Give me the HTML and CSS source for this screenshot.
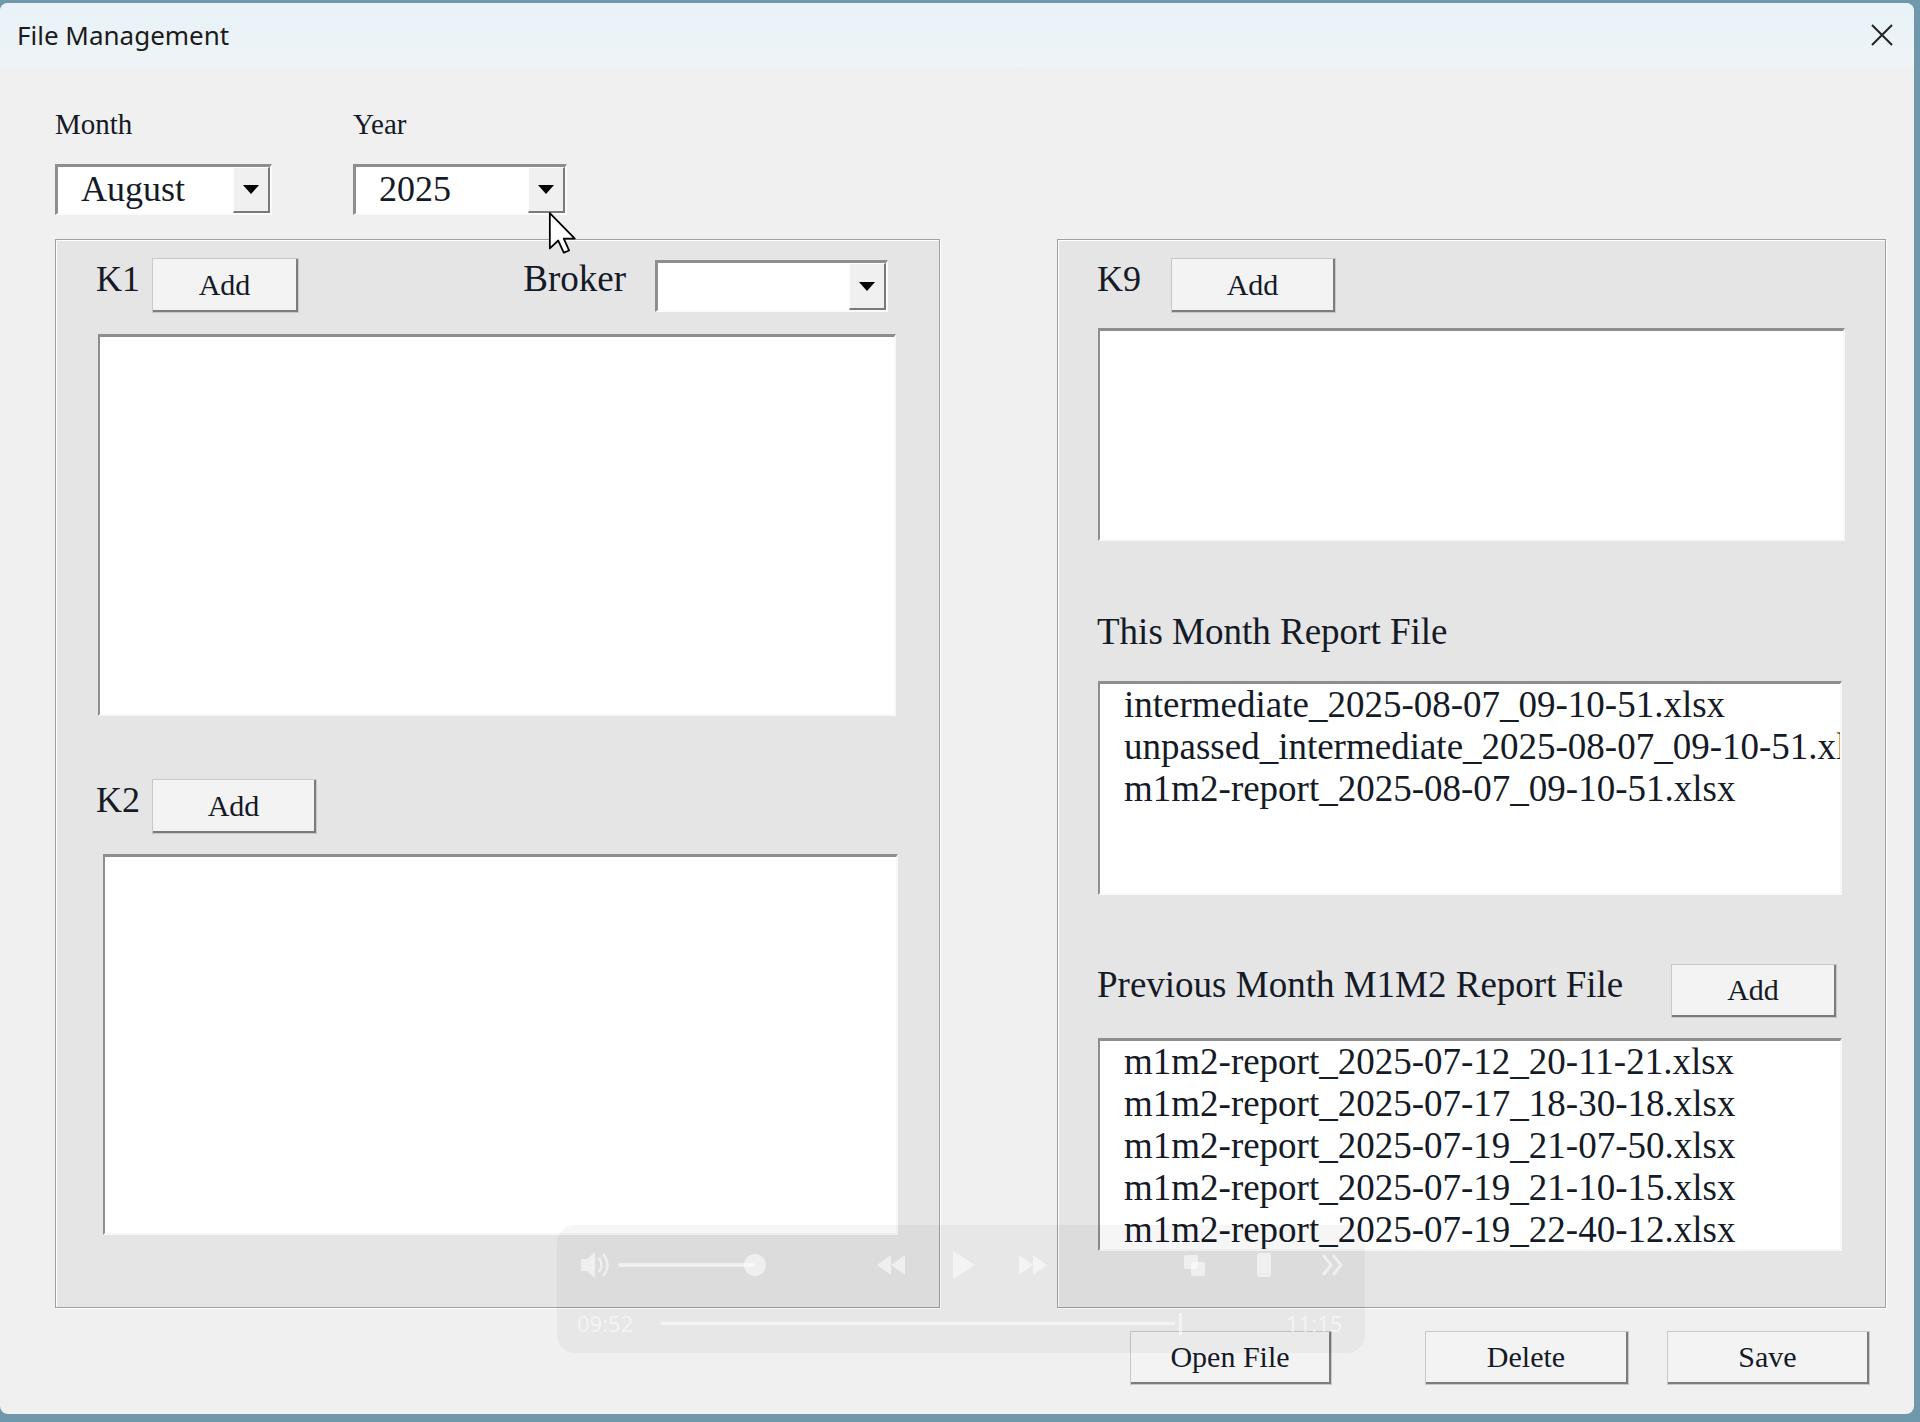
FILE: index.html
```html
<!DOCTYPE html>
<html lang="en">
<head>
    <meta charset="UTF-8">
    <title>File Management</title>
    <link rel="stylesheet" href="styles.css">
</head>
<body>
    <div class="window">
        <div class="titlebar">
            <span class="title">File Management</span>
            <span class="close">
                <svg width="24" height="24" viewBox="0 0 24 24"><path d="M2 2 L22 22 M22 2 L2 22" stroke="#222" stroke-width="2" fill="none"/></svg>
            </span>
        </div>

        <div class="content">
            <div class="period">
                <div class="field month">
                    <label>Month</label>
                    <div class="combo">
                        <span class="combo_value">August</span>
                        <span class="combo_btn"></span>
                    </div>
                </div>
                <div class="field year">
                    <label>Year</label>
                    <div class="combo">
                        <span class="combo_value">2025</span>
                        <span class="combo_btn"></span>
                    </div>
                </div>
            </div>

            <div class="panels">
                <section class="panel panel_left">
                    <div class="row row_k1">
                        <span class="tag">K1</span>
                        <button class="btn add_k1">Add</button>
                        <span class="tag broker_label">Broker</span>
                        <div class="combo broker">
                            <span class="combo_value"></span>
                            <span class="combo_btn"></span>
                        </div>
                    </div>
                    <ul class="listbox list_k1"></ul>

                    <div class="row row_k2">
                        <span class="tag">K2</span>
                        <button class="btn add_k2">Add</button>
                    </div>
                    <ul class="listbox list_k2"></ul>
                </section>

                <section class="panel panel_right">
                    <div class="row">
                        <span class="tag">K9</span>
                        <button class="btn add_k9">Add</button>
                    </div>
                    <ul class="listbox list_k9"></ul>

                    <h2 class="heading">This Month Report File</h2>
                    <ul class="listbox list_month">
                        <li>intermediate_2025-08-07_09-10-51.xlsx</li>
                        <li>unpassed_intermediate_2025-08-07_09-10-51.xlsx</li>
                        <li>m1m2-report_2025-08-07_09-10-51.xlsx</li>
                    </ul>

                    <div class="row row_prev">
                        <h2 class="heading">Previous Month M1M2 Report File</h2>
                        <button class="btn add_prev">Add</button>
                    </div>
                    <ul class="listbox list_prev">
                        <li>m1m2-report_2025-07-12_20-11-21.xlsx</li>
                        <li>m1m2-report_2025-07-17_18-30-18.xlsx</li>
                        <li>m1m2-report_2025-07-19_21-07-50.xlsx</li>
                        <li>m1m2-report_2025-07-19_21-10-15.xlsx</li>
                        <li>m1m2-report_2025-07-19_22-40-12.xlsx</li>
                    </ul>
                </section>
            </div>

            <div class="actions">
                <button class="btn open_btn">Open File</button>
                <button class="btn delete_btn">Delete</button>
                <button class="btn save_btn">Save</button>
            </div>
        </div>

        <!-- faint video player controls lying over the dialog -->
        <div class="player">
            <svg width="808" height="128" viewBox="0 0 808 128">
                <g fill="rgba(255,255,255,0.55)">
                    <path d="M24 34 h6 l8 -7 v26 l-8 -7 h-6 z"/>
                    <path d="M42 33 q5 7 0 14 M46 29 q9 11 0 22" stroke="rgba(255,255,255,0.55)" stroke-width="2.5" fill="none"/>
                    <rect x="61" y="38" width="137" height="4" rx="2"/>
                    <circle cx="198" cy="40" r="11"/>
                    <path d="M334 30 v20 l-14 -10 z M348 30 v20 l-14 -10 z"/>
                    <path d="M396 26 v28 l22 -14 z"/>
                    <path d="M462 30 v20 l14 -10 z M476 30 v20 l14 -10 z"/>
                    <rect x="627" y="30" width="14" height="14" rx="2"/>
                    <rect x="634" y="37" width="14" height="14" rx="2"/>
                    <rect x="700" y="28" width="14" height="24" rx="2"/>
                    <path d="M766 30 l8 10 l-8 10 M776 30 l8 10 l-8 10" stroke="rgba(255,255,255,0.55)" stroke-width="3" fill="none"/>
                    <rect x="104" y="97" width="514" height="3"/>
                    <rect x="622" y="88" width="3" height="22"/>
                    <text x="20" y="107" font-family="Noto Sans, sans-serif" font-size="22">09:52</text>
                    <text x="729" y="107" font-family="Noto Sans, sans-serif" font-size="22">11:15</text>
                </g>
            </svg>
        </div>

        <svg class="cursor" width="28" height="42" viewBox="0 0 12 19">
            <path d="M0.5 0.5 L0.5 16.5 L4.3 12.9 L6.8 18.4 L9.2 17.4 L6.8 12 L11.8 12 Z" fill="#fff" stroke="#000" stroke-width="0.8" stroke-linejoin="round"/>
        </svg>
    </div>
</body>
</html>
```

FILE: styles.css
```css
* {
    margin: 0;
    padding: 0;
    box-sizing: border-box;
}

body {
    background: #6f98ad;
    font-family: "Liberation Serif", "Times New Roman", serif;
    color: #141a26;
}

.window {
    position: relative;
    width: 1914px;
    height: 1411px;
    margin-top: 3px;
    background: #f0f0f0;
    border-radius: 8px;
    overflow: hidden;
}

.titlebar {
    height: 64px;
    display: flex;
    align-items: center;
    justify-content: space-between;
    padding: 0 20px 0 17px;
    background: linear-gradient(#e8f2f8, #eef4f7);
}

.title {
    font-family: "Noto Sans", sans-serif;
    font-size: 26px;
    color: #1b1b1b;
}

.close {
    display: flex;
}

.content {
    padding: 40px 0 0 55px;
}

/* month / year pickers */
.period {
    display: flex;
    gap: 81px;
}

.field label {
    display: block;
    font-size: 29px;
    line-height: 34px;
    margin-bottom: 23px;
}

.month {
    width: 217px;
}

.year {
    width: 214px;
}

.combo {
    display: flex;
    height: 51px;
    background: #fff;
    border-style: solid;
    border-width: 3px 2px 2px 3px;
    border-color: #8e8e8e #fbfbfb #fbfbfb #8e8e8e;
}

.combo_value {
    flex: 1;
    font-size: 36px;
    line-height: 44px;
    padding-left: 23px;
}

.combo_btn {
    width: 37px;
    display: flex;
    align-items: center;
    justify-content: center;
    background: #f0f0f0;
    border-style: solid;
    border-width: 1px 2px 2px 1px;
    border-color: #fff #7a7a7a #7a7a7a #fff;
}

.combo_btn::after {
    content: "";
    border-left: 8px solid transparent;
    border-right: 8px solid transparent;
    border-top: 9px solid #000;
}

/* group boxes */
.panels {
    display: flex;
    margin-top: 24px;
}

.panel {
    height: 1069px;
    background: #e5e5e5;
    border: 1px solid #a0a0a0;
    box-shadow: inset 1px 1px 0 #fff, 1px 1px 0 #fff;
    padding: 18px 0 0 40px;
}

.panel_left {
    width: 885px;
}

.panel_right {
    width: 829px;
    margin-left: 117px;
    padding-left: 39px;
}

.row {
    display: flex;
    align-items: flex-start;
}

.tag {
    font-size: 36px;
    line-height: 42px;
}

.btn {
    font-family: inherit;
    font-size: 30px;
    color: #141a26;
    height: 55px;
    background: #f3f3f3;
    border-style: solid;
    border-width: 1px 3px 3px 1px;
    border-color: #fff #7c7c7c #7c7c7c #fff;
    outline: 1px solid #c8c8c8;
    outline-offset: -1px;
}

.add_k1 {
    width: 147px;
    margin-left: 12px;
}

.broker_label {
    font-size: 37px;
    margin-left: auto;
}

.broker {
    width: 233px;
    height: 52px;
    margin: 2px 51px 0 29px;
}

.add_k2 {
    width: 165px;
    margin-left: 12px;
}

.add_k9 {
    width: 165px;
    margin-left: 30px;
}

/* list boxes */
.listbox {
    background: #fff;
    border-style: solid;
    border-width: 3px 2px 2px 2px;
    border-color: #8e8e8e #f8f8f8 #f8f8f8 #8e8e8e;
    overflow: hidden;
    list-style: none;
}

.listbox li {
    font-size: 37px;
    line-height: 42px;
    padding-left: 24px;
    white-space: nowrap;
}

.list_k1 {
    width: 798px;
    height: 382px;
    margin: 21px 0 0 2px;
}

.row_k2 {
    margin-top: 63px;
}

.list_k2 {
    width: 795px;
    height: 381px;
    margin: 20px 0 0 7px;
}

.list_k9 {
    width: 747px;
    height: 213px;
    margin: 15px 0 0 1px;
}

.heading {
    font-weight: normal;
    font-size: 37px;
    line-height: 42px;
    margin-top: 70px;
}

.list_month {
    width: 744px;
    height: 214px;
    margin: 28px 0 0 1px;
}

.row_prev {
    width: 740px;
    justify-content: space-between;
    margin-top: 69px;
}

.row_prev .heading {
    margin-top: 0;
}

.add_prev {
    width: 166px;
    height: 54px;
}

.list_prev {
    width: 744px;
    height: 213px;
    margin: 20px 0 0 1px;
}

/* bottom buttons */
.actions {
    display: flex;
    margin-top: 23px;
    padding-left: 1075px;
}

.actions .btn {
    height: 54px;
}

.open_btn {
    width: 202px;
}

.delete_btn {
    width: 204px;
    margin-left: 93px;
}

.save_btn {
    width: 203px;
    margin-left: 38px;
}

.player {
    position: absolute;
    left: 557px;
    top: 1222px;
    width: 808px;
    height: 128px;
    border-radius: 18px;
    background: rgba(0, 0, 0, 0.035);
}

.cursor {
    position: absolute;
    left: 548px;
    top: 209px;
}
```
